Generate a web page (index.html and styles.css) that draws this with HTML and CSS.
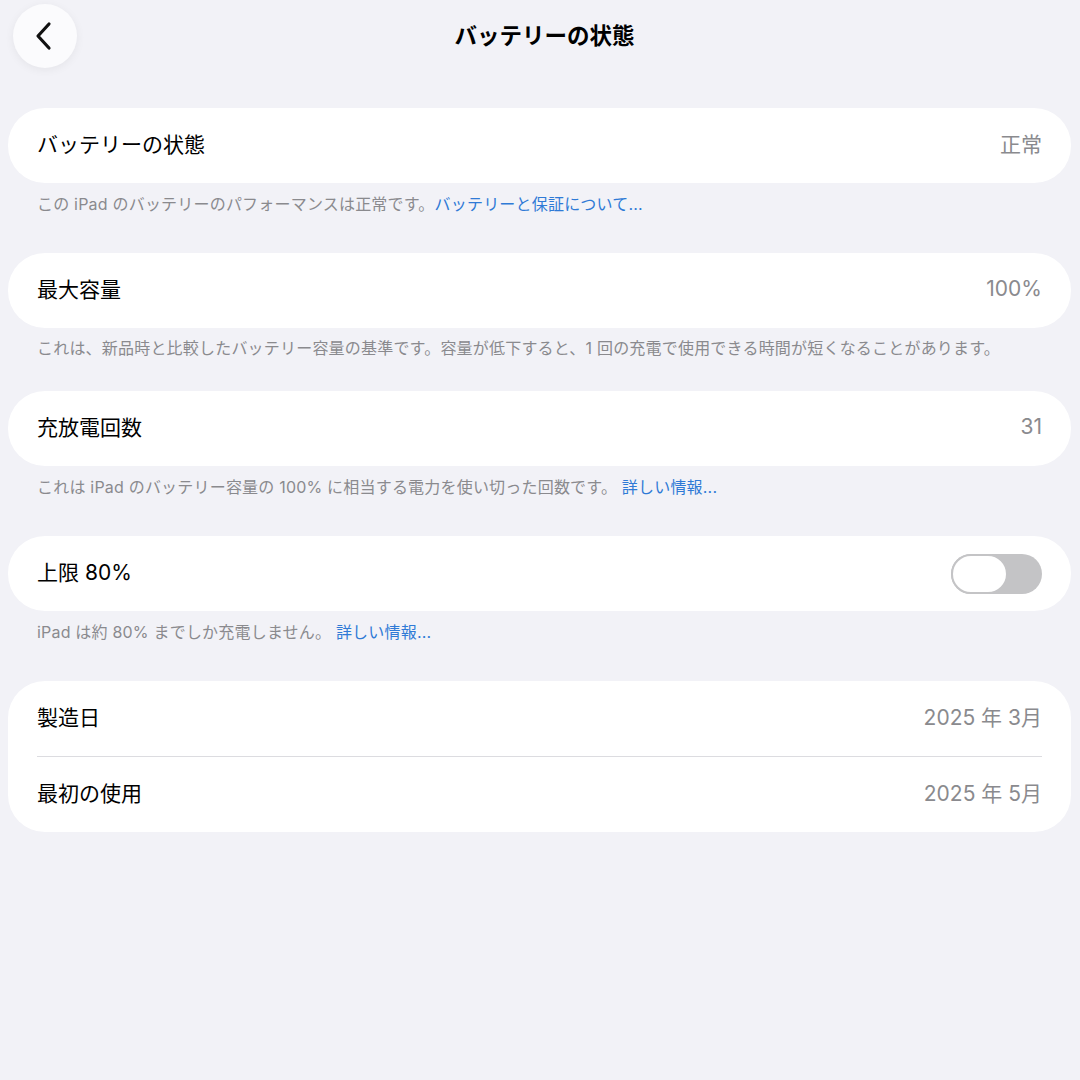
FILE: index.html
```html
<!DOCTYPE html>
<html lang="ja">
<head>
<meta charset="utf-8">
<link rel="stylesheet" href="styles.css">
</head>
<body>
<div class="page">
  <header class="nav">
    <button class="back" aria-label="戻る">
      <svg width="22" height="30" viewBox="0 0 22 30"><path d="M16 3 L5 15 L16 27" fill="none" stroke="#111" stroke-width="3.2" stroke-linecap="round" stroke-linejoin="round"/></svg>
    </button>
    <h1 class="title">バッテリーの状態</h1>
  </header>

  <main class="content">
    <section class="group">
      <div class="card">
        <div class="row"><span class="label">バッテリーの状態</span><span class="value">正常</span></div>
      </div>
      <p class="note">この iPad のバッテリーのパフォーマンスは正常です。<span class="link">バッテリーと保証について...</span></p>
    </section>

    <section class="group group-tight">
      <div class="card">
        <div class="row"><span class="label">最大容量</span><span class="value">100%</span></div>
      </div>
      <p class="note">これは、新品時と比較したバッテリー容量の基準です。容量が低下すると、1 回の充電で使用できる時間が短くなることがあります。</p>
    </section>

    <section class="group">
      <div class="card">
        <div class="row"><span class="label">充放電回数</span><span class="value">31</span></div>
      </div>
      <p class="note">これは iPad のバッテリー容量の 100% に相当する電力を使い切った回数です。 <span class="link">詳しい情報...</span></p>
    </section>

    <section class="group">
      <div class="card">
        <div class="row"><span class="label">上限 80%</span><span class="switch"><span class="knob"></span></span></div>
      </div>
      <p class="note">iPad は約 80% までしか充電しません。 <span class="link">詳しい情報...</span></p>
    </section>

    <section class="group">
      <div class="card">
        <div class="row"><span class="label">製造日</span><span class="value">2025 年 3月</span></div>
        <div class="sep"></div>
        <div class="row"><span class="label">最初の使用</span><span class="value">2025 年 5月</span></div>
      </div>
    </section>
  </main>
</div>
</body>
</html>
```

FILE: styles.css
```css
* { box-sizing: border-box; }
html, body {
  margin: 0;
  padding: 0;
  background: #f2f2f7;
}
body {
  font-family: Inter, "Noto Sans CJK JP", "Noto Sans", sans-serif;
  color: #000;
  width: 1080px;
  height: 1080px;
  overflow: hidden;
}
.page {
  padding: 0 9px 0 8px;
}
.nav {
  position: relative;
  height: 108px;
  display: flex;
  justify-content: center;
}
.back {
  position: absolute;
  left: 5px;
  top: 4px;
  width: 64px;
  height: 64px;
  border-radius: 50%;
  border: none;
  background: #fbfbfd;
  box-shadow: 0 2px 10px rgba(0, 0, 0, 0.06);
  display: flex;
  align-items: center;
  justify-content: center;
  padding: 0 2px 0 0;
}
.title {
  margin: 0;
  padding-left: 10px;
  font-size: 22.5px;
  font-weight: 700;
  line-height: 72px;
  color: #000;
}
.content {
  display: flex;
  flex-direction: column;
}
.group {
  margin-bottom: 39px;
}
.group-tight {
  margin-bottom: 33px;
}
.group-tight .note {
  padding-top: 10px;
}
.card {
  background: #fff;
  border-radius: 37px;
  padding: 0 29px;
}
.row {
  height: 75px;
  display: flex;
  align-items: center;
  justify-content: space-between;
  padding-bottom: 5px;
}
.label {
  font-size: 21px;
  color: #000;
}
.value {
  font-size: 21px;
  color: #8a8a8e;
}
.sep {
  height: 1px;
  background: #dcdce0;
}
.note {
  margin: 0;
  padding: 11px 29px 0;
  font-size: 16px;
  letter-spacing: 0.2px;
  line-height: 20px;
  color: #8a8a8e;
}
.link {
  color: #2f7ad6;
}
.switch {
  width: 91px;
  height: 40px;
  border-radius: 20px;
  background: #c4c4c6;
  display: flex;
  align-items: center;
  padding: 0;
  margin-top: 5px;
}
.knob {
  width: 57px;
  height: 40px;
  border-radius: 20px;
  background: #fff;
  border: 2.5px solid #c4c4c6;
}
```
